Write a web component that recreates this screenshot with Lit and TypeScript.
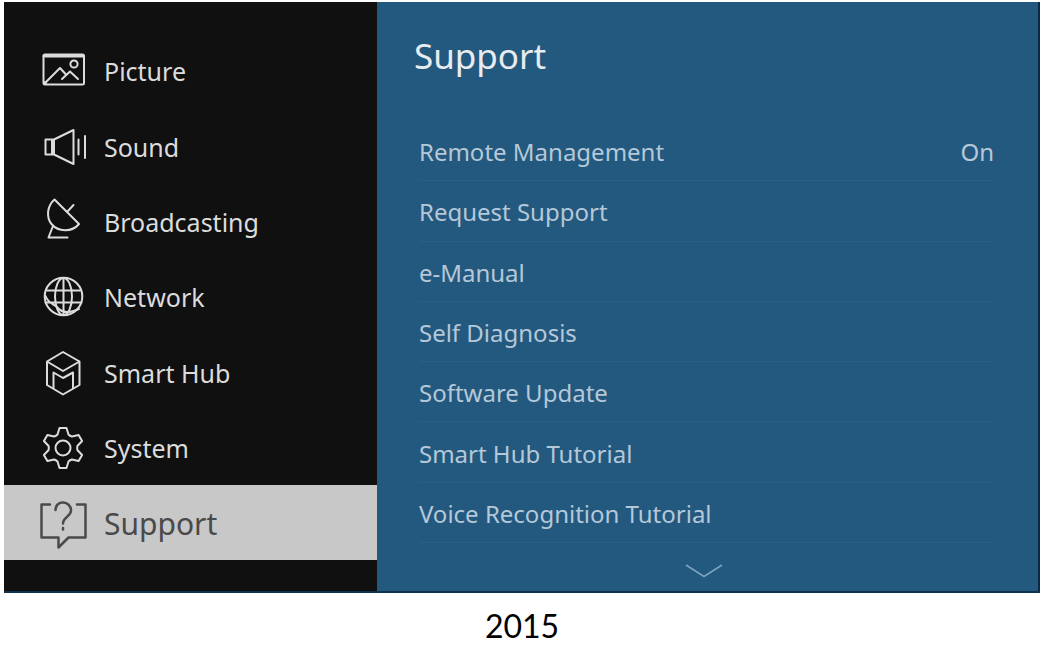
import { LitElement, html, svg, css } from "lit";
import { customElement, state } from "lit/decorators.js";
import { classMap } from "lit/directives/class-map.js";

const icons: Record<string, unknown> = {
  Picture: svg`<rect x="3.500" y="8.500" width="40.500" height="30" rx="1.500"/><path d="M4 10h39.500" stroke-width="3"/><path d="M5 37L20 22l6 6.500M22 33l8-7.500 8 7.500"/><circle cx="34" cy="18" r="3.600"/><circle cx="5" cy="37" r="1"/>`,
  Sound: svg`<path d="M5.500 17.500h8.500v15H5.500zM12 18v14M14 17.500L33.500 8v34L14 32.500"/><path d="M38.500 17.500v15M45 14v22"/>`,
  Broadcasting: svg`<path d="M14.500 2.500L39 27C32 35.500 18 35 11.500 27C6 20 7 9 14.500 2.500zM27 15L33.500 8M13 29L8.500 40.500H27.500"/>`,
  Network: svg`<circle cx="23.500" cy="24.500" r="18.800"/><ellipse cx="23.500" cy="24.500" rx="8.500" ry="18.500"/><path d="M23.500 6v37M7 18.500h33M5.500 30.500h36M5.500 24C9 33 14 31 19 37C24 42 32 40 39 37"/>`,
  "Smart Hub": svg`<path d="M23 4L39.500 13.500v23.500L23 46.500 7 37V13.500zM7 13.500l16 9.500 16.500-9.500M13.500 40.500V24.500l9.500 5.500 10-5.500v16"/>`,
  System: svg`<path d="M17.500 11.500L19.500 5h7l2 6.500Q30 13 31.900 13.500L38.600 12l3.500 6-4.700 5Q37 25 37.400 27l4.700 5-3.500 6-6.700-1.500Q30 37 28.500 38.500l-2 6.500h-7l-2-6.500Q16 37 14.100 36.500L7.400 38l-3.500-6 4.700-5Q9 25 8.600 23l-4.700-5 3.500-6 6.700 1.500Q16 13 17.500 11.500z"/><circle cx="23" cy="25" r="7.500"/>`,
  Support: svg`<path d="M10 5.500H1.500v33h17v10l10-10h17v-33H37"/><path d="M15.500 11C15.500 .5 31 1.500 31 11.500C31 17.500 23 18 23 24.500M23 29v1.500"/>`,
};

const sections = ["Picture", "Sound", "Broadcasting", "Network", "Smart Hub", "System", "Support"];

const entries: { label: string; value?: string }[] = [
  { label: "Remote Management", value: "On" },
  { label: "Request Support" },
  { label: "e-Manual" },
  { label: "Self Diagnosis" },
  { label: "Software Update" },
  { label: "Smart Hub Tutorial" },
  { label: "Voice Recognition Tutorial" },
];

@customElement("app-root")
export class AppRoot extends LitElement {
  @state() private selected = "Support";

  static styles = css`
    :host {
      display: flex;
      flex-direction: column;
      box-sizing: border-box;
      min-height: 100vh;
      padding: 2px 4px 0;
      background: #fff;
      font-family: "Noto Sans", sans-serif;
    }
    * { box-sizing: border-box; }
    button {
      margin: 0;
      border: 0;
      background: none;
      font: inherit;
      color: inherit;
      text-align: left;
      cursor: pointer;
    }
    .screen {
      flex: 1;
      display: grid;
      grid-template-columns: 36% 1fr;
      border-bottom: 2px solid #12324b;
    }
    .sidebar {
      display: flex;
      flex-direction: column;
      padding: 30px 0 31px;
      background: #101010;
      color: #dcdcdc;
    }
    .section {
      flex: 1;
      display: flex;
      align-items: center;
      gap: 16px;
      padding: 3px 0 0 36px;
      font-size: 25px;
      line-height: 32px;
    }
    .section.selected {
      background: #c8c8c8;
      color: #4a4a4a;
      font-size: 30px;
    }
    .icon {
      width: 48px;
      height: 50px;
      overflow: visible;
      fill: none;
      stroke: currentColor;
      stroke-width: 2;
      stroke-linejoin: round;
      stroke-linecap: round;
    }
    .selected .icon {
      stroke-width: 2.5;
    }
    .panel {
      display: flex;
      flex-direction: column;
      background: #23597f;
      border-right: 2px solid #0b2942;
      padding: 0 44px 0 37px;
    }
    .title {
      margin: 0;
      height: 119px;
      padding-top: 32px;
      font-size: 35px;
      line-height: 44px;
      font-weight: 400;
      color: #e8ecef;
    }
    .list {
      flex: 1;
      display: flex;
      flex-direction: column;
      margin: 0;
      padding: 0 0 0 5px;
      list-style: none;
    }
    .row {
      flex: 1;
      display: flex;
      border-bottom: 1px solid #2b6085;
    }
    .entry {
      flex: 1;
      display: flex;
      align-items: center;
      justify-content: space-between;
      padding: 3px 0 0;
      font-size: 24px;
      line-height: 32px;
      color: #b5c8d8;
    }
    .more {
      display: flex;
      align-items: center;
      justify-content: center;
      height: 48px;
      padding: 8px 0 0;
    }
    .chevron {
      width: 38px;
      height: 14px;
      fill: none;
      stroke: #7fa3bd;
      stroke-width: 1.5;
    }
    .year {
      margin: 0;
      height: 78px;
      padding-top: 13px;
      font-family: Lato, sans-serif;
      font-size: 32px;
      line-height: 40px;
      text-align: center;
      color: #000;
    }
  `;

  render() {
    return html`
      <main class="screen">
        <nav class="sidebar" aria-label="Menu">
          ${sections.map(
            (name) => html`<button
              class=${classMap({ section: true, selected: name === this.selected })}
              @click=${() => (this.selected = name)}
            ><svg class="icon" viewBox="0 0 48 50" aria-hidden="true">${icons[name]}</svg><span>${name}</span></button>`
          )}
        </nav>
        <section class="panel">
          <h1 class="title">Support</h1>
          <ul class="list">
            ${entries.map(
              (e) => html`<li class="row"><button class="entry"><span>${e.label}</span>${e.value ? html`<span>${e.value}</span>` : null}</button></li>`
            )}
          </ul>
          <button class="more" aria-label="More">
            <svg class="chevron" viewBox="0 0 38 14"><path d="M1 1l18 11.500L37 1"/></svg>
          </button>
        </section>
      </main>
      <p class="year">2015</p>
    `;
  }
}
